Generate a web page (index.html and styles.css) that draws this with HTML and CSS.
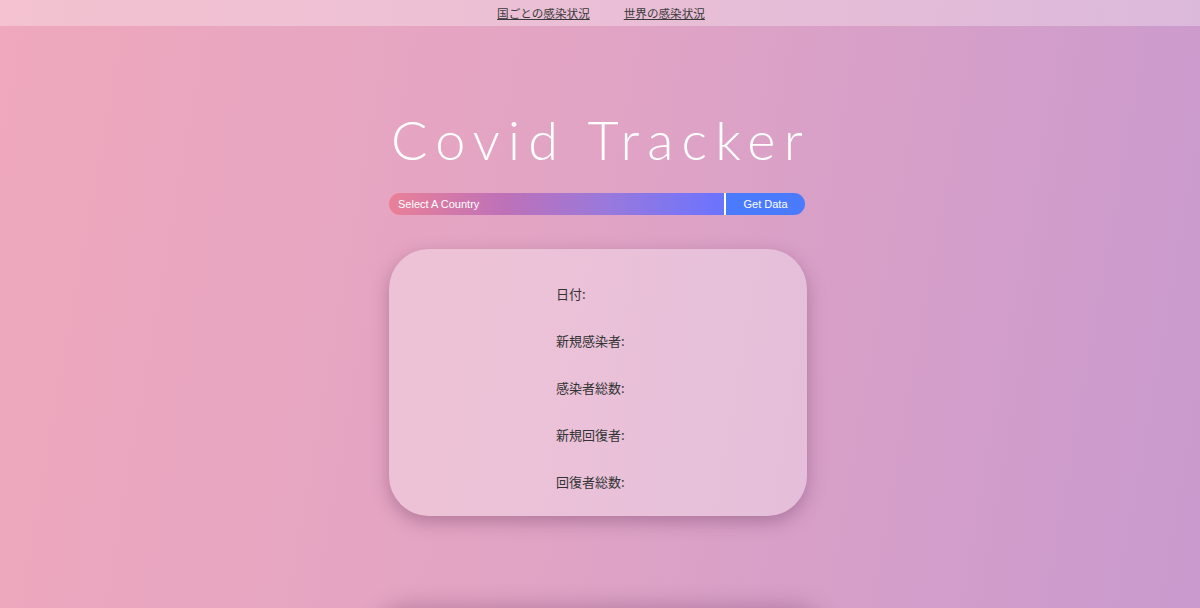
FILE: index.html
```html
<!DOCTYPE html>
<html lang="ja">
<head>
<meta charset="utf-8">
<title>Covid Tracker</title>
<link rel="stylesheet" href="styles.css">
</head>
<body>
<nav class="nav">
  <a class="nav-link" href="#">国ごとの感染状況</a>
  <a class="nav-link" href="#">世界の感染状況</a>
</nav>
<main class="main">
  <h1 class="title">Covid Tracker</h1>
  <div class="search">
    <div class="select">Select A Country</div>
    <button class="btn">Get Data</button>
  </div>
  <section class="card">
    <p class="row">日付:</p>
    <p class="row">新規感染者:</p>
    <p class="row">感染者総数:</p>
    <p class="row">新規回復者:</p>
    <p class="row">回復者総数:</p>
  </section>
  <section class="card2"></section>
</main>
</body>
</html>
```
FILE: styles.css
```css
html, body {
  margin: 0;
  padding: 0;
}
body {
  width: 1200px;
  height: 608px;
  overflow: hidden;
  background: linear-gradient(100deg, #efa8bc 0%, #e2a4c4 45%, #c99ace 100%);
  font-family: "Liberation Sans", "Noto Sans CJK JP", sans-serif;
  color: #333;
}
.nav {
  height: 26px;
  background: rgba(255, 255, 255, 0.3);
  display: flex;
  justify-content: center;
  align-items: center;
  gap: 34px;
  padding-left: 2px;
}
.nav-link {
  font-family: "Noto Sans CJK JP", sans-serif;
  font-size: 11.6px;
  color: #3a3a3a;
  text-decoration: underline;
}
.main {
  display: flex;
  flex-direction: column;
  align-items: center;
}
.title {
  margin: 82px 0 0 0;
  font-family: "Lato", "Open Sans", sans-serif;
  font-weight: 300;
  font-size: 54px;
  line-height: 64px;
  letter-spacing: 8.2px;
  color: #fff;
  padding-left: 2px;
}
.search {
  margin-top: 21px;
  width: 416px;
  height: 22px;
  display: flex;
  border-radius: 11px;
  overflow: hidden;
  margin-left: -6px;
}
.select {
  width: 337px;
  background: linear-gradient(90deg, #ea8097 0%, #bd71b9 35%, #9979dc 65%, #6b73ff 100%);
  color: #fff;
  font-size: 11px;
  line-height: 22px;
  padding-left: 9px;
  box-sizing: border-box;
  border-right: 2px solid #fff;
}
.btn {
  flex: 1;
  border: none;
  background: #4a7bff;
  color: #fff;
  font-family: "Liberation Sans", sans-serif;
  font-size: 11px;
  padding: 0;
}
.card {
  margin-top: 34px;
  margin-left: -4px;
  width: 418px;
  height: 267px;
  box-sizing: border-box;
  border-radius: 40px;
  background: rgba(255, 255, 255, 0.33);
  box-shadow: 0 6px 18px rgba(90, 40, 80, 0.35);
  padding: 35px 0 0 167px;
  display: flex;
  flex-direction: column;
  gap: 28px;
}
.row {
  margin: 0;
  font-family: "Noto Sans CJK JP", sans-serif;
  font-size: 13px;
  line-height: 19px;
  color: #333;
}
.card2 {
  margin-top: 94px;
  width: 460px;
  height: 200px;
  border-radius: 40px;
  background: rgba(255, 255, 255, 0.2);
  box-shadow: 0 -4px 22px rgba(90, 40, 80, 0.3);
}
```
